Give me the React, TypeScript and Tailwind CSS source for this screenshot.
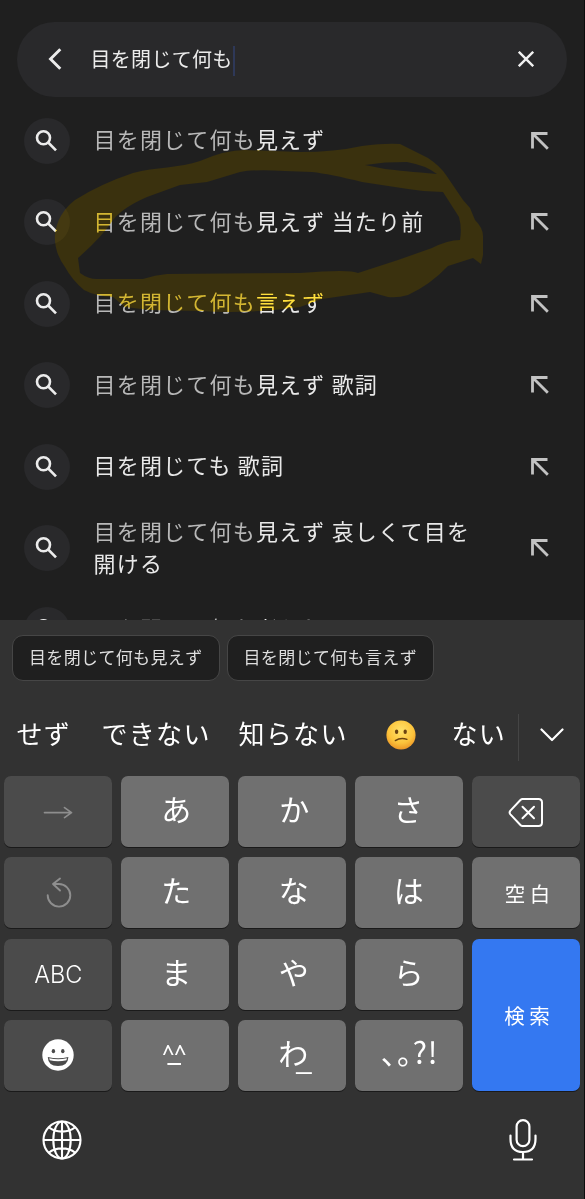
import type { ReactNode } from "react";
import clsx from "clsx";

type Suggestion = {
  typed?: string;
  rest: string;
};

const suggestions: Suggestion[] = [
  { typed: "目を閉じて何も", rest: "見えず" },
  { typed: "目を閉じて何も", rest: "見えず 当たり前" },
  { typed: "目を閉じて何も", rest: "言えず" },
  { typed: "目を閉じて何も", rest: "見えず 歌詞" },
  { rest: "目を閉じても 歌詞" },
  { typed: "目を閉じて何も", rest: "見えず 哀しくて目を開ける" },
  { typed: "目を閉じて何も", rest: "考えし" },
];

const MARKER_PATH =
  "M75 200 Q100 184 133 173 C155 167 180 168 200 161 Q225 150 245 150 L300 152 Q335 152 362 146 Q385 143 400 144 L428 158 Q440 166 446 175 L463 200 L470 208 L475 220 Q483 228 483 236 L483 255 L481 264 L473 258 L448 266 Q430 285 408 295 Q398 298 388 297 L370 292 L322 299 L300 307 Q250 314 200 311 L150 310 L125 307 L113 297 Q95 296 84 290 Q72 280 65 267 Q54 252 55 235 Q57 214 75 200 Z " +
  "M78 258 L80 273 Q88 279 97 279 L143 279 Q155 275 167 274 L300 273 Q350 269 358 273 L398 260 L432 248 Q448 240 460 240 Q462 228 459 217 L443 192 Q425 192 408 189 L362 182 Q330 174 312 172 L285 171 Q255 169 240 172 L207 182 L180 185 L147 197 Q122 208 113 220 Q102 237 78 258 Z " +
  "M365 165 L385 162.5 L407 162 Q425 165 437 174 Q402 171 385 169 Z";

function SearchGlyph() {
  return (
    <svg viewBox="0 0 46 46" className="size-[46px]" fill="none" stroke="#ececec" strokeWidth="2.6">
      <circle cx="19.5" cy="19.8" r="6.5" />
      <path d="M24.2 24.5 32 32.3" />
    </svg>
  );
}

function InsertArrow() {
  return (
    <svg viewBox="0 0 18 18" className="size-[18px]" fill="none" stroke="#c2c2c2" strokeWidth="2.8">
      <path d="M16.5 1.5H1.5V16.4M1.8 1.8 16.8 16.8" />
    </svg>
  );
}

function SuggestionRow({ item }: { item: Suggestion }) {
  return (
    <div className="flex h-[81.5px] shrink-0 items-center pl-[23.5px] pr-[35px]">
      <span className="size-[46px] shrink-0 rounded-full bg-[#29292b]">
        <SearchGlyph />
      </span>
      <p className="mb-[5px] ml-[24px] w-[392px] text-[22px] leading-[32px] tracking-[1.2px] text-[#e8e8e8]">
        {item.typed && <span className="text-[#b8b8b8]">{item.typed}</span>}
        {item.rest}
      </p>
      <span className="ml-auto">
        <InsertArrow />
      </span>
    </div>
  );
}

function Key({ tone = "light", className, children }: { tone?: "light" | "dark" | "blue"; className?: string; children: ReactNode }) {
  return (
    <div
      className={clsx(
        "flex items-center justify-center rounded-[7px] text-white shadow-[0_1px_0_#1a1a1a]",
        tone === "light" && "bg-[#707070]",
        tone === "dark" && "bg-[#4b4b4b]",
        tone === "blue" && "bg-[#3478f1]",
        className
      )}
    >
      {children}
    </div>
  );
}

function Kana({ children, className }: { children: ReactNode; className?: string }) {
  return <span className={clsx("pb-[7px] text-[30px] leading-none", className)}>{children}</span>;
}

function ConfusedFace() {
  return (
    <svg viewBox="0 0 30 30" className="size-[30px]">
      <defs>
        <radialGradient id="face" cx="50%" cy="35%" r="65%">
          <stop offset="0" stopColor="#ffe26a" />
          <stop offset="0.65" stopColor="#fcc43c" />
          <stop offset="1" stopColor="#ec9626" />
        </radialGradient>
      </defs>
      <circle cx="15" cy="15" r="14.6" fill="url(#face)" />
      <ellipse cx="10.6" cy="11.8" rx="1.7" ry="2.2" fill="#6b4310" />
      <ellipse cx="19.2" cy="11.8" rx="1.7" ry="2.2" fill="#6b4310" />
      <path d="M9.3 20.6Q14.5 17.2 21 19.3" fill="none" stroke="#6b4310" strokeWidth="1.3" strokeLinecap="round" />
    </svg>
  );
}

function GrinFace() {
  return (
    <svg viewBox="0 0 32 32" className="mb-[1px] size-[32px]">
      <circle cx="16" cy="16" r="15.7" fill="#fff" />
      <ellipse cx="11.4" cy="12.2" rx="1.7" ry="2.1" fill="#4b4b4b" />
      <ellipse cx="20.8" cy="12.2" rx="1.7" ry="2.1" fill="#4b4b4b" />
      <path d="M5.8 18Q16 20.6 26.4 18Q26 27 16 27T5.8 18Z" fill="#4b4b4b" />
      <path d="M7.2 19.3Q16 21.4 25 19.3L24.4 21.3Q16 23.2 7.8 21.3Z" fill="#fff" />
    </svg>
  );
}

function Keyboard() {
  return (
    <div className="grid h-[315.4px] grid-cols-[repeat(5,108px)] grid-rows-[repeat(4,71px)] gap-x-[9px] gap-y-[10.4px] pl-[4.3px]">
      <Key tone="dark">
        <svg viewBox="0 0 30 14" className="h-[14px] w-[30px]" fill="none" stroke="#8e8e8e" strokeWidth="1.7" strokeLinecap="round" strokeLinejoin="round">
          <path d="M1.5 7.6H28.5M21.5 2.6 28.5 7.6 21.5 12.6" />
        </svg>
      </Key>
      <Key><Kana className="pl-[2px]">あ</Kana></Key>
      <Key><Kana className="pl-[4px]">か</Kana></Key>
      <Key><Kana className="pr-[2px]">さ</Kana></Key>
      <Key tone="dark">
        <svg viewBox="0 0 36 30" className="h-[30px] w-[36px]" fill="none" stroke="#fff" strokeWidth="2" strokeLinecap="round" strokeLinejoin="round">
          <path d="M14.6 2H30.5Q34 2 34 5.5V25.5Q34 29 30.5 29H14.6Q13.4 29 12.4 28L2.4 17.4Q.8 15.5 2.4 13.6L12.4 3Q13.4 2 14.6 2Z" />
          <path d="M14.5 9.8 26 21.3M26 9.8 14.5 21.3" />
        </svg>
      </Key>

      <Key tone="dark">
        <svg viewBox="0 0 28 32" className="mb-[1px] ml-[1px] h-[32px] w-[28px]" fill="none" stroke="#8e8e8e" strokeWidth="1.9" strokeLinecap="round" strokeLinejoin="round">
          <path d="M2.7 19.3A11.3 11.3 0 1 0 14 8L8 8M15 2.5 8 8 15 14.5" />
        </svg>
      </Key>
      <Key><Kana className="pl-[2px]">た</Kana></Key>
      <Key><Kana className="pl-[3px]">な</Kana></Key>
      <Key><Kana className="pr-[1px]">は</Kana></Key>
      <Key className="pl-[7px] text-[20.5px] tracking-[4.6px]">空白</Key>

      <Key tone="dark" className="font-[Inter] text-[23.5px] font-[350]">ABC</Key>
      <Key><Kana className="pl-[2px]">ま</Kana></Key>
      <Key><Kana className="pl-[3px]">や</Kana></Key>
      <Key><Kana className="pr-[1px]">ら</Kana></Key>
      <Key tone="blue" className="row-span-2 pl-[6px] text-[20.5px] tracking-[4.6px]">検索</Key>

      <Key tone="dark"><GrinFace /></Key>
      <Key className="flex-col pr-[2px] font-['Noto_Sans'] font-medium">
        <span className="h-[13px] text-[21px] leading-[28px]">^^</span>
        <span className="-mt-[9px] h-[29px] text-[31px] leading-[10px]">_</span>
      </Key>
      <Key>
        <span className="relative pb-[7px] pl-[2px] text-[30px] leading-none">
          わ
          <span className="absolute -right-[4px] top-[5px]">_</span>
        </span>
      </Key>
      <Key><span className="pb-[9px] pl-[1px] text-[30px] leading-none tracking-[0.7px]">､｡?!</span></Key>
    </div>
  );
}

export default function App() {
  return (
    <div className="relative flex h-[1199px] w-[585px] flex-col overflow-hidden border-r border-[#0c0c0c] bg-[#1f1f1f] font-['Noto_Sans_CJK_JP',sans-serif]">
      <div className="flex h-[620px] shrink-0 flex-col overflow-hidden">
        {/* Search field */}
        <div className="mx-[17px] mt-[21.5px] flex h-[75.5px] shrink-0 items-center rounded-full bg-[#29292b] pl-[30px] pr-[33px]">
          <svg viewBox="0 0 16 24" className="h-[24px] w-[16px]" fill="none" stroke="#ececec" strokeWidth="2.9">
            <path d="M13.3 2.2 3.5 12 13.3 21.8" />
          </svg>
          <span className="mb-[1px] ml-[27.5px] text-[20px] tracking-[0.3px] text-[#ececec]">目を閉じて何も</span>
          <span className="mt-[3px] h-[30px] w-[2.5px] bg-[#2e3858]" />
          <svg viewBox="0 0 16 16" className="ml-auto size-[16px]" fill="none" stroke="#f0f0f0" strokeWidth="2.4">
            <path d="M.8.8 15.2 15.2M15.2.8.8 15.2" />
          </svg>
        </div>

        {/* Suggestions, the last one runs under the keyboard */}
        <div className="mt-[2.8px] flex flex-col">
          {suggestions.map((item, i) => (
            <SuggestionRow key={i} item={item} />
          ))}
        </div>
      </div>

      {/* Marker stroke: the first layer tints the text, the second lifts the background */}
      <svg viewBox="0 0 585 620" className="pointer-events-none absolute left-0 top-0 h-[620px] w-[585px] mix-blend-multiply">
        <path d={MARKER_PATH} fill="#ffe03c" fillRule="evenodd" />
      </svg>
      <svg viewBox="0 0 585 620" className="pointer-events-none absolute left-0 top-0 h-[620px] w-[585px] mix-blend-plus-lighter">
        <path d={MARKER_PATH} fill="#1b1506" fillRule="evenodd" />
      </svg>

      <div className="flex flex-1 flex-col bg-[#323232]">
        <div className="flex gap-[7px] pl-[12px] pt-[15px]">
          {["目を閉じて何も見えず", "目を閉じて何も言えず"].map((text) => (
            <span
              key={text}
              className="flex h-[46px] w-[207.5px] items-center justify-center rounded-[11px] border border-[#464646] bg-[#1f1f1f] pb-[2px] text-[17px] tracking-[0.35px] text-[#dedede]"
            >
              {text}
            </span>
          ))}
        </div>

        {/* Conversion candidates */}
        <div className="flex h-[95px] shrink-0 items-center pl-[16.5px] pt-[13px] text-[26px] tracking-[1.3px] text-white">
          <span className="mb-[5px] w-[85px]">せず</span>
          <span className="mb-[5px] w-[137px]">できない</span>
          <span className="mb-[5px] w-[147px]">知らない</span>
          <span className="w-[66px]"><ConfusedFace /></span>
          <span className="mb-[5px] w-[66.5px]">ない</span>
          <span className="mt-[4px] h-[47px] w-px bg-[#454545]" />
          <svg viewBox="0 0 24 14" className="ml-[21px] h-[14px] w-[24px]" fill="none" stroke="#fff" strokeWidth="2.2" strokeLinecap="round" strokeLinejoin="round">
            <path d="M1.5 1.5 12 12 22.5 1.5" />
          </svg>
        </div>

        <Keyboard />

        <div className="flex h-[98px] items-center justify-between pl-[42px] pr-[47.5px]">
          <svg viewBox="0 0 40 40" className="size-[40px]" fill="none" stroke="#fff" strokeWidth="2.1">
            <circle cx="20" cy="20" r="18.5" />
            <ellipse cx="20" cy="20" rx="8.7" ry="18.5" />
            <path d="M20 1.5V38.5M1.5 20H38.5M6.8 7.3Q12 11.6 20 11.6T33.2 7.3M6.8 32.7Q12 28.4 20 28.4T33.2 32.7" />
          </svg>
          <svg viewBox="0 0 28 42" className="h-[42px] w-[28px]" fill="none" stroke="#fff" strokeWidth="2.2" strokeLinecap="round">
            <rect x="7.6" y="1.2" width="12.8" height="26" rx="6.4" />
            <path d="M1.5 16.5V20Q1.5 33 14 33T26.5 20V16.5M14 33V40.5M5 40.5H23" />
          </svg>
        </div>
      </div>
    </div>
  );
}
